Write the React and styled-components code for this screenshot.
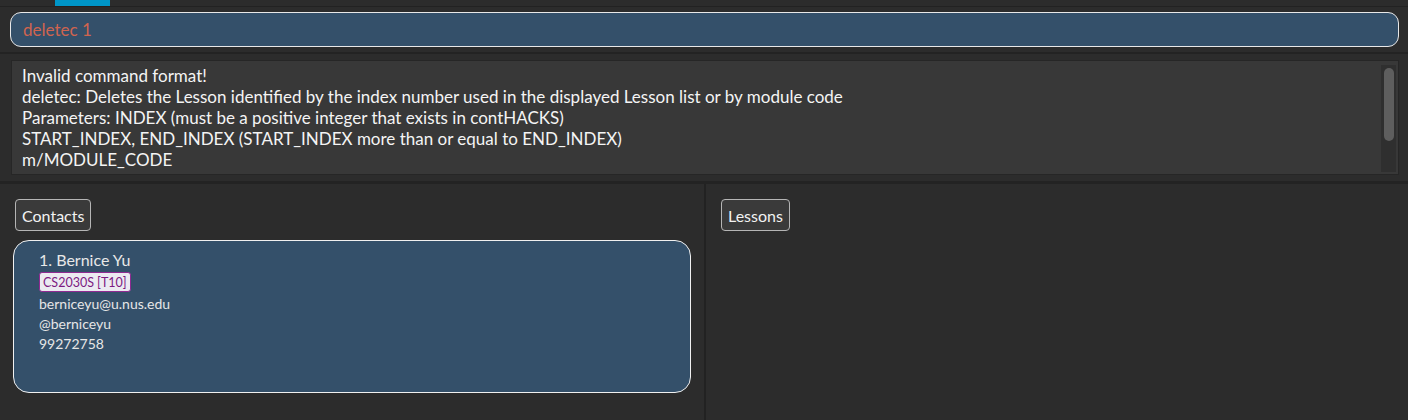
import React from "react";
import styled, { createGlobalStyle } from "styled-components";

const GlobalStyle = createGlobalStyle`
  html, body {
    margin: 0;
    padding: 0;
    background: #2c2c2c;
  }
  * { box-sizing: border-box; }
`;

const Window = styled.div`
  width: 1408px;
  height: 420px;
  overflow: hidden;
  background: #2c2c2c;
  display: flex;
  flex-direction: column;
  font-family: Lato, "Open Sans", "Liberation Sans", sans-serif;
`;

const MenuBar = styled.div`
  height: 7px;
  display: flex;
  padding-left: 55px;
  border-bottom: 1px solid #222;
`;

const MenuTab = styled.div`
  width: 55px;
  height: 100%;
  background: #0096c9;
`;

const CommandPane = styled.div`
  padding: 5px 9px 5px 10px;
  border-bottom: 2px solid #232323;
`;

const CommandInput = styled.div`
  height: 35px;
  background: #34506a;
  border: 1px solid #e8e8e8;
  border-radius: 11px;
  padding: 0 12px;
  display: flex;
  align-items: center;
  color: #d0644f;
  font-size: 17px;
`;

const ResultPane = styled.div`
  padding: 6px 9px 6px 11px;
  border-bottom: 3px solid #232323;
`;

const ResultBox = styled.div`
  height: 115px;
  background: #383838;
  border: 1px solid #262626;
  display: flex;
  padding: 4px 2px 2px 10px;
`;

const ResultText = styled.div`
  flex: 1;
  color: #f4f4f4;
  font-size: 17px;
  line-height: 21px;
  white-space: pre;
`;

const ScrollTrack = styled.div`
  width: 15px;
  background: #2f2f2f;
  display: flex;
  justify-content: center;
  padding-top: 3px;
`;

const ScrollThumb = styled.div`
  width: 10px;
  height: 73px;
  background: #5e5e5e;
  border-radius: 5px;
`;

const Lists = styled.div`
  flex: 1;
  display: flex;
`;

const ListColumn = styled.div`
  width: ${(p) => p.$width};
  flex: ${(p) => (p.$width ? "none" : 1)};
  padding: 15px 15px 0 ${(p) => p.$left}px;
  border-right: ${(p) => (p.$divider ? "2px solid #222" : "none")};
  display: flex;
  flex-direction: column;
  align-items: flex-start;
`;

const ListLabel = styled.div`
  height: 32px;
  padding: 0 6px;
  display: flex;
  align-items: center;
  background: #3a3a3a;
  border: 1px solid #b5b5b5;
  border-radius: 4px;
  color: #f2f2f2;
  font-size: 16px;
`;

const Card = styled.div`
  margin-top: 9px;
  margin-left: -2px;
  width: 678px;
  height: 153px;
  background: #34506a;
  border: 1px solid #f0f0f0;
  border-radius: 16px;
  padding: 9px 25px;
  display: flex;
  flex-direction: column;
  align-items: flex-start;
`;

const Name = styled.div`
  color: #e8e8e8;
  font-size: 16px;
  line-height: 20px;
`;

const Tag = styled.span`
  margin-top: 2px;
  height: 20px;
  padding: 0 3px;
  display: flex;
  align-items: center;
  background: #eceaf1;
  border: 1px solid #8e2a91;
  border-radius: 3px;
  color: #7d1a82;
  font-size: 12.5px;
`;

const Detail = styled.div`
  color: #e6e6e6;
  font-size: 14px;
  line-height: 20px;
  margin-top: ${(p) => p.$gap || 0}px;
`;

const resultLines = [
  "Invalid command format!",
  "deletec: Deletes the Lesson identified by the index number used in the displayed Lesson list or by module code",
  "Parameters: INDEX (must be a positive integer that exists in contHACKS)",
  "START_INDEX, END_INDEX (START_INDEX more than or equal to END_INDEX)",
  "m/MODULE_CODE",
];

export default function App() {
  return (
    <>
      <GlobalStyle />
      <Window>
        <MenuBar>
          <MenuTab />
        </MenuBar>
        <CommandPane>
          <CommandInput>deletec 1</CommandInput>
        </CommandPane>
        <ResultPane>
          <ResultBox>
            <ResultText>{resultLines.join("\n")}</ResultText>
            <ScrollTrack>
              <ScrollThumb />
            </ScrollTrack>
          </ResultBox>
        </ResultPane>
        <Lists>
          <ListColumn $width="706px" $left={15} $divider>
            <ListLabel>Contacts</ListLabel>
            <Card>
              <Name>1. Bernice Yu</Name>
              <Tag>CS2030S [T10]</Tag>
              <Detail $gap={2}>berniceyu@u.nus.edu</Detail>
              <Detail>@berniceyu</Detail>
              <Detail>99272758</Detail>
            </Card>
          </ListColumn>
          <ListColumn $left={15}>
            <ListLabel>Lessons</ListLabel>
          </ListColumn>
        </Lists>
      </Window>
    </>
  );
}
